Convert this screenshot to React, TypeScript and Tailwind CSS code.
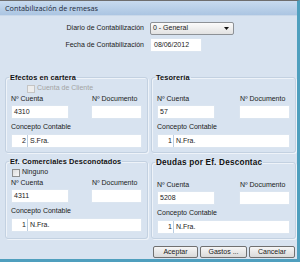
import React from 'react';

const font = "font-['Liberation_Sans',Arial,sans-serif]";

function Field({ value, className }: { value?: string; className?: string }) {
  return (
    <div className={`h-[14px] bg-white border border-[#dbe5f0] pl-[2px] flex items-center text-[7px] text-[#1a1a1a] ${className ?? ''}`}>
      {value}
    </div>
  );
}

function Check({ label, disabled }: { label: string; disabled?: boolean }) {
  return (
    <div className="flex items-center gap-[2px] h-[9px]">
      <div
        className={
          disabled
            ? 'w-[8px] h-[8px] border border-[#c4c4c4] bg-[#ededed]'
            : 'w-[8px] h-[8px] border border-[#8e8f8f] bg-gradient-to-br from-[#dcdcdc] to-[#f8f8f8]'
        }
      />
      <span className={disabled ? 'text-[#a3a3a3]' : 'text-[#1a1a1a]'}>{label}</span>
    </div>
  );
}

type GroupProps = {
  title: string;
  big?: boolean;
  check?: React.ReactNode;
  cuenta: string;
  num: string;
  concepto: string;
};

function Group({ title, big, check, cuenta, num, concepto }: GroupProps) {
  return (
    <fieldset className="border border-[#c3d1e1] rounded-[3px] shadow-[inset_1px_1px_0_#eef3f9,1px_1px_0_#eef3f9] px-[5px] pb-[4px]">
      <legend className={`ml-[-2px] px-[1px] font-bold text-[#111] ${big ? 'text-[8.2px] leading-[11px] tracking-[0.2px]' : 'text-[7.4px] leading-[9px] tracking-[0.1px]'}`}>
        {title}
      </legend>
      <div className="h-[9px] mt-[2px]">{check}</div>
      <div className="flex justify-between mt-[2px] leading-[8px]">
        <span>Nº Cuenta</span>
        <span className="w-[50px]">Nº Documento</span>
      </div>
      <div className="flex justify-between mt-[2px]">
        <Field value={cuenta} className="w-[58px]" />
        <Field className="w-[51px]" />
      </div>
      <div className="mt-[4px] leading-[8px]">Concepto Contable</div>
      <div className="mt-[3px] h-[14px] bg-white border border-[#dbe5f0] flex items-center">
        <div className="w-[16px] h-full flex items-center justify-end pr-[1px] border-r border-[#b9cde2]">{num}</div>
        <div className="pl-[2px]">{concepto}</div>
      </div>
    </fieldset>
  );
}

export default function App() {
  return (
    <div className={`${font} w-[300px] h-[262px] flex flex-col bg-[#d8e3f0] border-t border-t-[#6e6e6e] border-r-[3px] border-r-[#4f9fbe] border-b-[3px] border-b-[#4f9fbe] text-[7px] text-[#1a1a1a] overflow-hidden`}>
      <div className="h-[15px] shrink-0 bg-gradient-to-b from-[#c8dbef] to-[#abc5e2] border-b border-[#c9d8e9] pl-[5px] flex items-center font-['Open_Sans',sans-serif] text-[7.3px] text-[#1e2a3a]">
        Contabilización de remesas
      </div>

      <div className="flex-1 pl-[5px] pr-[1px] pt-[6px] flex flex-col">
        <div className="grid grid-cols-[139px_1fr] gap-x-[6px] gap-y-[3px] items-center">
          <div className="text-right">Diario de Contabilización</div>
          <div className="w-[84px] h-[13px] border border-[#8d9196] rounded-[2px] bg-gradient-to-b from-[#fbfbfb] to-[#e2e2e2] flex items-center justify-between pl-[2px] pr-[4px]">
            <span>0 - General</span>
            <svg width="5" height="3" viewBox="0 0 5 3"><path d="M0 0H5L2.5 3Z" fill="#111" /></svg>
          </div>
          <div className="text-right pr-0">Fecha de Contabilización</div>
          <div className="w-[52px] h-[14px] bg-white border border-[#dbe5f0] flex items-center pl-[3px]">08/06/2012</div>
        </div>

        <div className="grid grid-cols-[143px_145px] gap-x-[3px] gap-y-[4px] mt-[21px]">
          <Group
            title="Efectos en cartera"
            check={<div className="pl-[16px]"><Check label="Cuenta de Cliente" disabled /></div>}
            cuenta="4310"
            num="2"
            concepto="S.Fra."
          />
          <Group title="Tesorería" cuenta="57" num="1" concepto="N.Fra." />
          <Group
            title="Ef. Comerciales Desconotados"
            check={<div className="pl-[1px]"><Check label="Ninguno" /></div>}
            cuenta="4311"
            num="1"
            concepto="N.Fra."
          />
          <Group title="Deudas por Ef. Descontac" big cuenta="5208" num="1" concepto="N.Fra." />
        </div>

        <div className="flex justify-end gap-[2px] mt-[7px] pr-[1px]">
          {[
            ['Aceptar', 'w-[45px]'],
            ['Gastos ...', 'w-[47px]'],
            ['Cancelar', 'w-[46px]'],
          ].map(([t, w]) => (
            <div
              key={t}
              className={`${w} h-[12px] border border-[#707070] rounded-[2px] bg-gradient-to-b from-[#f6f6f6] to-[#dadada] flex items-center justify-center`}
            >
              {t}
            </div>
          ))}
        </div>
      </div>
    </div>
  );
}
